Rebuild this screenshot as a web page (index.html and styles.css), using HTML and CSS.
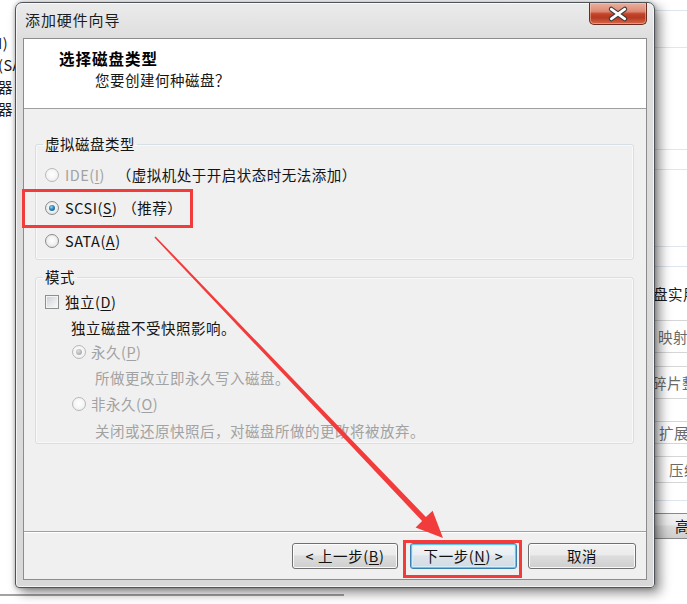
FILE: index.html
```html
<!DOCTYPE html>
<html lang="zh-CN">
<head>
<meta charset="utf-8">
<title>添加硬件向导</title>
<link rel="stylesheet" href="styles.css">
</head>
<body>
<div class="desktop">
  <div class="bg-left">
    <div>I)</div>
    <div>(SA</div>
    <div>器</div>
    <div>器</div>
  </div>

  <div class="bg-right">
    <div class="bl bl1"></div>
    <div class="bl bl2"></div>
    <div class="bl bl3"></div>
    <div class="bl bl4"></div>
    <div class="bl bl5"></div>
    <div class="bl bl6"></div>
    <div class="bt-text">盘实用</div>
    <div class="bbox bb1">映射</div>
    <div class="bbox bb2">碎片整</div>
    <div class="bbox bb3">扩展</div>
    <div class="bbox bb4">压缩</div>
    <div class="bline"></div>
    <div class="bbtn">高</div>
  </div>

  <div class="bg-bottom"></div>

  <div class="dialog">
    <div class="titlebar">
      <span class="title">添加硬件向导</span>
      <div class="close">
        <svg width="58" height="22" viewBox="0 0 58 22">
          <path d="M22 6 L36 16 M36 6 L22 16" stroke="#3b3b3b" stroke-width="5" stroke-linecap="round"/>
          <path d="M22 6 L36 16 M36 6 L22 16" stroke="#ffffff" stroke-width="2.8" stroke-linecap="round"/>
        </svg>
      </div>
    </div>
    <div class="client">
      <div class="header">
        <div class="h-title">选择磁盘类型</div>
        <div class="h-sub">您要创建何种磁盘？</div>
      </div>
      <div class="body">
        <fieldset class="group g1">
          <legend>虚拟磁盘类型</legend>
          <div class="row r1 off">
            <span class="radio"></span><span class="lbl">IDE(<u>I</u>)</span>
            <span class="note note-ide">（虚拟机处于开启状态时无法添加）</span>
          </div>
          <div class="row r1">
            <span class="radio on"></span><span class="lbl">SCSI(<u>S</u>)</span>
            <span class="note note-scsi">（推荐）</span>
          </div>
          <div class="row r1">
            <span class="radio"></span><span class="lbl">SATA(<u>A</u>)</span>
          </div>
        </fieldset>
        <fieldset class="group g2">
          <legend>模式</legend>
          <div class="row r-check">
            <span class="check"></span><span class="lbl">独立(<u>D</u>)</span>
          </div>
          <div class="row desc1">独立磁盘不受快照影响。</div>
          <div class="row r-perm off">
            <span class="radio on"></span><span class="lbl lbl2">永久(<u>P</u>)</span>
          </div>
          <div class="row desc2 off">所做更改立即永久写入磁盘。</div>
          <div class="row r-nonperm off">
            <span class="radio"></span><span class="lbl lbl2">非永久(<u>O</u>)</span>
          </div>
          <div class="row desc3 off">关闭或还原快照后，对磁盘所做的更改将被放弃。</div>
        </fieldset>
      </div>
      <div class="footer">
        <button class="btn btn-back">&lt; 上一步(<u>B</u>)</button>
        <button class="btn btn-next">下一步(<u>N</u>) &gt;</button>
        <button class="btn btn-cancel">取消</button>
      </div>
    </div>
  </div>

  <div class="mark mark-scsi"></div>
  <div class="mark mark-next"></div>

  <svg class="arrow" width="687" height="604" viewBox="0 0 687 604">
    <polygon fill="#f23c3c" points="155.6,236.4 425.9,517.0 432.6,510.8 443,538 415.6,527.4 422.1,521.0 154.4,237.6"/>
  </svg>
</div>
</body>
</html>
```

FILE: styles.css
```css
* { box-sizing: border-box; }
html, body { margin: 0; padding: 0; }
body {
  width: 687px;
  height: 604px;
  overflow: hidden;
  background: #ffffff;
  font-family: "Noto Sans CJK SC", "Noto Sans", sans-serif;
  font-size: 14.5px;
  letter-spacing: 0.5px;
  color: #141414;
}
u { text-decoration: underline; text-underline-offset: 2px; }

.desktop { position: relative; width: 687px; height: 604px; overflow: hidden; }

/* background window, left part */
.bg-left {
  position: absolute;
  left: -2px;
  top: 32px;
  line-height: 22px;
  color: #1a1a1a;
  z-index: 1;
}

/* background window, right part */
.bg-right {
  position: absolute;
  left: 650px;
  top: 0;
  width: 40px;
  z-index: 1;
  color: #1a1a1a;
}
.bl { border-bottom: 1px solid #dfe6ee; }
.bl1 { height: 11px; }
.bl2 { height: 37px; }
.bl3 { height: 102px; }
.bl4 { height: 20px; }
.bl5 { height: 77px; }
.bl6 { height: 20px; }
.bt-text { margin-top: 17px; line-height: 20px; padding-left: 3px; white-space: nowrap; }
.bbox {
  display: flex;
  align-items: center;
  border: 1px solid #d6d6d6;
  border-right: none;
  color: #6a6a6a;
  white-space: nowrap;
  background: #fff;
}
.bb1 { margin-top: 16px; height: 33px; padding-left: 7px; }
.bb2 { margin-top: 13px; height: 33px; padding-left: 1px; }
.bb3 { margin-top: 22px; height: 23px; padding-left: 8px; }
.bb4 { margin-top: 12px; height: 27px; padding-left: 18px; }
.bline { margin-top: 17px; height: 1px; background: #dfe6ee; }
.bbtn {
  margin-top: 12px;
  height: 26px;
  border: 1px solid #8a8a8a;
  border-right: none;
  border-radius: 3px 0 0 3px;
  background: linear-gradient(#f2f2f2 0%, #ebebeb 45%, #dddddd 50%, #cfcfcf 100%);
  padding-left: 24px;
  line-height: 24px;
  color: #111;
}

.bg-bottom {
  position: absolute;
  left: 0;
  top: 594px;
  width: 344px;
  height: 2px;
  background: #a3a3a3;
}

/* dialog window */
.dialog {
  position: absolute;
  left: 15px;
  top: 2px;
  width: 640px;
  height: 586px;
  z-index: 2;
  border: 1px solid #50545a;
  border-radius: 7px 7px 4px 4px;
  background: linear-gradient(#ebebeb 0px, #dedede 36px, #d8d8d8 100%);
  box-shadow: inset 0 0 0 1px rgba(255,255,255,0.7), 5px 5px 12px rgba(0,0,0,0.45), 0 0 4px rgba(0,0,0,0.3);
  padding: 0 7px 7px 7px;
  display: flex;
  flex-direction: column;
}
.titlebar {
  height: 35px;
  display: flex;
  justify-content: space-between;
  align-items: flex-start;
  flex: none;
}
.title {
  margin-top: 7px;
  padding-left: 2px;
  line-height: 20px;
  font-size: 15px;
  letter-spacing: 0.9px;
  color: #1c1c1c;
}
.close {
  width: 58px;
  height: 22px;
  border: 1px solid #6e2a1f;
  border-top: none;
  border-radius: 0 0 5px 5px;
  background: linear-gradient(#eab0a0 0%, #dd8a73 40%, #c4432b 52%, #b63a22 70%, #d8674a 100%);
  box-shadow: inset 0 0 0 1px rgba(255,210,190,0.45);
  display: flex;
  align-items: center;
  justify-content: center;
}
.close svg { display: block; }

.client {
  flex: 1;
  border: 1px solid #8c8c8c;
  background: #f0f0f0;
  display: flex;
  flex-direction: column;
}
.header {
  height: 70px;
  flex: none;
  background: #ffffff;
  border-bottom: 1px solid #a0a0a0;
}
.h-title {
  margin-top: 9px;
  padding-left: 35px;
  line-height: 20px;
  font-size: 15.5px;
  letter-spacing: 1px;
  font-weight: bold;
  color: #000;
}
.h-sub {
  margin-top: 2px;
  padding-left: 71px;
  line-height: 20px;
  color: #141414;
}

.body {
  height: 422px;
  flex: none;
  padding: 26px 12px 0 11px;
}
.group {
  margin: 0;
  min-width: 0;
  border: 1px solid #d5dfe5;
  border-radius: 3px;
  box-shadow: inset 0 0 0 1px rgba(255,255,255,0.6);
  padding: 5px 0 2px 9px;
}
.group legend {
  padding: 0 2px;
  margin-left: -2px;
  line-height: 18px;
  color: #141414;
}
.g2 { margin-top: 8px; padding: 2px 0 0 9px; }

.row { display: flex; align-items: center; white-space: nowrap; }
.r1 { height: 33px; }
.off .lbl, .row.off { color: #a2a2a2; }
.off .note { color: #141414; }
.lbl { margin-left: 6px; }
.lbl2 { margin-left: 5px; }
.note-ide { margin-left: 12px; }
.note-scsi { margin-left: 5px; }

.r-check { height: 27px; }
.desc1 { height: 24px; padding-left: 26px; }
.r-perm { height: 25px; padding-left: 27px; }
.desc2 { height: 26px; padding-left: 50px; }
.r-nonperm { height: 27px; padding-left: 27px; }
.desc3 { height: 26px; padding-left: 50px; }

.radio {
  width: 14px;
  height: 14px;
  flex: none;
  border-radius: 50%;
  border: 1px solid #8a8c8e;
  background: radial-gradient(circle at 50% 45%, #ffffff 0, #f2f2f2 45%, #d4d6d8 100%);
  display: flex;
  align-items: center;
  justify-content: center;
}
.radio.on::after {
  content: "";
  width: 6px;
  height: 6px;
  border-radius: 50%;
  background: radial-gradient(circle at 40% 35%, #9ad8f5 0, #2b82b8 45%, #124e78 100%);
}
.off .radio {
  border-color: #b9b9b9;
  background: radial-gradient(circle at 50% 45%, #ffffff 0, #f6f6f6 50%, #e6e6e6 100%);
}
.off .radio.on::after {
  background: radial-gradient(circle at 40% 35%, #e0e0e0 0, #b4b4b4 60%, #9c9c9c 100%);
}

.check {
  width: 14px;
  height: 14px;
  flex: none;
  border: 1px solid #8e8f8f;
  background: linear-gradient(135deg, #c9cdd2 0%, #e4e6e8 50%, #fbfbfb 100%);
  box-shadow: inset 0 0 0 1px #f4f4f4;
}

.footer {
  flex: 1;
  border-top: 1px solid #a0a0a0;
  box-shadow: inset 0 1px #ffffff;
  display: flex;
  justify-content: flex-end;
  align-items: flex-start;
  padding: 11px 10px 0 0;
}
.btn {
  height: 26px;
  margin: 0;
  padding: 0;
  border: 1px solid #707070;
  border-radius: 3px;
  background: linear-gradient(#f2f2f2 0%, #ebebeb 45%, #dddddd 50%, #cfcfcf 100%);
  box-shadow: inset 0 0 0 1px rgba(255,255,255,0.85);
  font-family: inherit;
  font-size: 14.5px;
  letter-spacing: 0.6px;
  line-height: 24px;
  color: #111;
}
.btn-back { width: 106px; }
.btn-next {
  width: 107px;
  margin-left: 12px;
  border-color: #3c7fb1;
  box-shadow: inset 0 0 0 1px #62c6ef, inset 0 0 0 2px #d3effb;
  background: linear-gradient(#f3f7fa 0%, #e9eef2 45%, #dde4ea 50%, #d3dbe2 100%);
}
.btn-cancel { width: 108px; margin-left: 11px; }

/* annotations */
.mark {
  position: absolute;
  z-index: 3;
  border: 3px solid #f23c3c;
}
.mark-scsi { left: 22px; top: 189px; width: 171px; height: 39px; }
.mark-next { left: 403px; top: 540px; width: 119px; height: 38px; }

.arrow {
  position: absolute;
  left: 0;
  top: 0;
  z-index: 4;
  pointer-events: none;
}
```
